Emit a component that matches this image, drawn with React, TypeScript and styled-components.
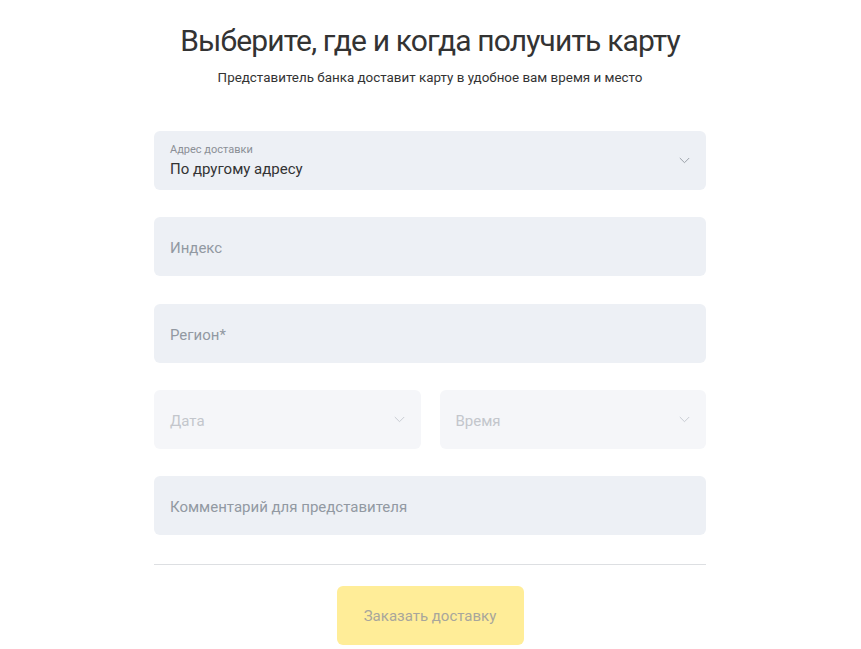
import React from "react";
import styled, { createGlobalStyle } from "styled-components";

const GlobalStyle = createGlobalStyle`
  body {
    margin: 0;
    background: #fff;
    font-family: Roboto, "Liberation Sans", sans-serif;
    color: #333;
  }
`;

const Page = styled.div`
  width: 552px;
  margin-left: calc(50% - 276.5px);
  padding-top: 20px;
  display: flex;
  flex-direction: column;
  align-items: center;
`;

const Title = styled.h1`
  margin: 0;
  font-size: 30px;
  font-weight: 400;
  letter-spacing: -0.85px;
  line-height: 42px;
  color: #333;
  text-align: center;
`;

const Subtitle = styled.p`
  margin: 7px 0 0;
  font-size: 13.4px;
  line-height: 18px;
  color: #333;
  text-align: center;
`;

const Form = styled.div`
  width: 100%;
  margin-top: 44px;
  display: flex;
  flex-direction: column;
  gap: 27.3px;
`;

const Row = styled.div`
  display: grid;
  grid-template-columns: 1fr 1fr;
  gap: 19px;
`;

const Field = styled.div<{ $disabled?: boolean }>`
  position: relative;
  height: 59px;
  border-radius: 6px;
  background: ${(p) => (p.$disabled ? "#f5f6f9" : "#edf0f5")};
  padding: 0 16px;
  display: flex;
  flex-direction: column;
  justify-content: center;
  box-sizing: border-box;
`;

const Label = styled.span`
  font-size: 11px;
  line-height: 14px;
  color: #8b8f96;
`;

const Value = styled.span`
  font-size: 15px;
  line-height: 20px;
  color: #333;
  margin-top: 2px;
`;

const Placeholder = styled.span<{ $disabled?: boolean }>`
  font-size: 15px;
  line-height: 20px;
  color: ${(p) => (p.$disabled ? "#c3c6cc" : "#9299a2")};
  margin-top: 3px;
`;

const Chevron = styled.svg<{ $top: number }>`
  position: absolute;
  right: 16px;
  top: ${(p) => p.$top}px;
  width: 11px;
  height: 7px;
`;

const Divider = styled.hr`
  width: 100%;
  margin: 29px 0 0;
  border: none;
  border-top: 1px solid #dddfe2;
`;

const SubmitButton = styled.button`
  margin-top: 21px;
  width: 187px;
  height: 59px;
  border: none;
  border-radius: 6px;
  background: #ffed98;
  color: #a8a69c;
  font-family: Roboto, "Liberation Sans", sans-serif;
  font-size: 15px;
  cursor: default;
`;

const Arrow = ({ top, faded }: { top: number; faded?: boolean }) => (
  <Chevron $top={top} viewBox="0 0 11 7">
    <path
      d="M0.8 1L5.5 5.7L10.2 1"
      fill="none"
      stroke={faded ? "#c8ccd3" : "#9aa0a8"}
      strokeWidth="1"
    />
  </Chevron>
);

const App: React.FC = () => (
  <>
    <GlobalStyle />
    <Page>
      <Title>Выберите, где и когда получить карту</Title>
      <Subtitle>Представитель банка доставит карту в удобное вам время и место</Subtitle>
      <Form>
        <Field>
          <Label>Адрес доставки</Label>
          <Value>По другому адресу</Value>
          <Arrow top={26} />
        </Field>
        <Field>
          <Placeholder>Индекс</Placeholder>
        </Field>
        <Field>
          <Placeholder>Регион*</Placeholder>
        </Field>
        <Row>
          <Field $disabled>
            <Placeholder $disabled>Дата</Placeholder>
            <Arrow top={26} faded />
          </Field>
          <Field $disabled>
            <Placeholder $disabled>Время</Placeholder>
            <Arrow top={26} faded />
          </Field>
        </Row>
        <Field>
          <Placeholder>Комментарий для представителя</Placeholder>
        </Field>
      </Form>
      <Divider />
      <SubmitButton disabled>Заказать доставку</SubmitButton>
    </Page>
  </>
);

export default App;
